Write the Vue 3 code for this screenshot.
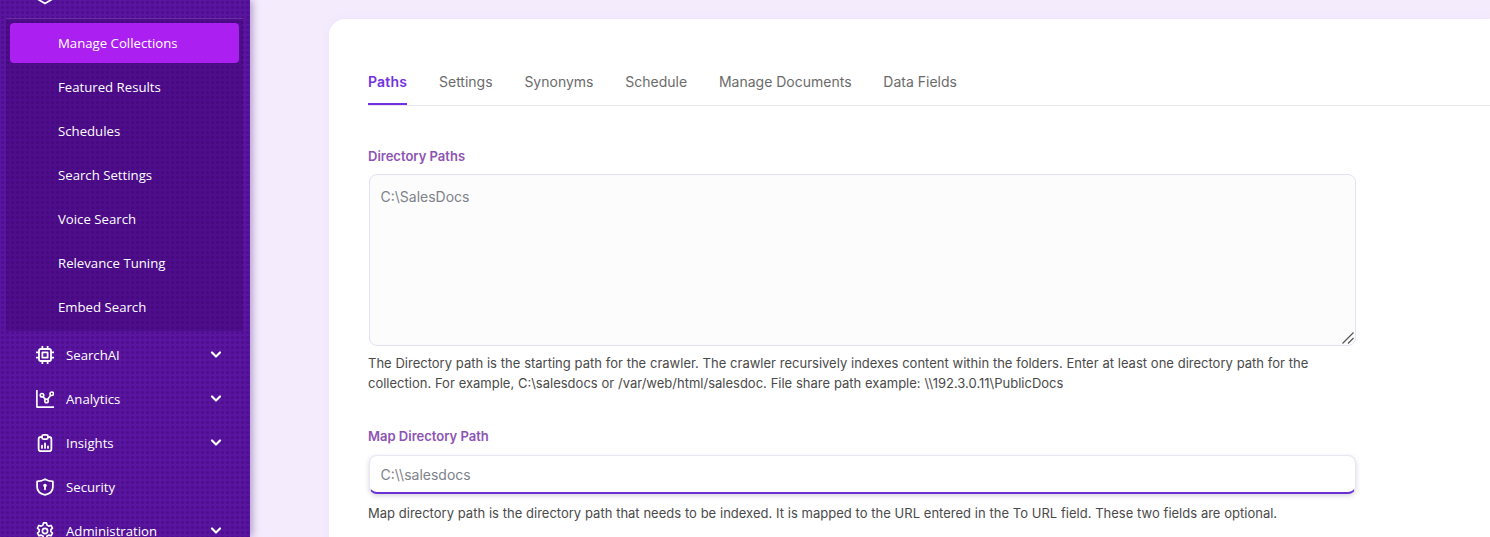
<script setup>
const subItems = ['Featured Results', 'Schedules', 'Search Settings', 'Voice Search', 'Relevance Tuning', 'Embed Search']
const tabs = ['Settings', 'Synonyms', 'Schedule', 'Manage Documents', 'Data Fields']
</script>

<template>
  <div class="page">
    <aside class="sidebar">
      <div class="nav-item top-item">
        <svg class="icon" viewBox="0 0 24 24" fill="none" stroke="currentColor" stroke-width="2.400" stroke-linejoin="round"><path d="M12 2 2 8v8l10 6 10-6V8L12 2Z" /></svg>
      </div>
      <div class="submenu">
        <a class="sub-item active">Manage Collections</a>
        <a v-for="item in subItems" :key="item" class="sub-item">{{ item }}</a>
      </div>
      <div class="nav-item">
        <svg class="icon" viewBox="0 0 24 24" fill="none" stroke="currentColor" stroke-width="2.400" stroke-linecap="butt" stroke-linejoin="round"><rect x="4" y="4" width="16" height="16" rx="2.500" /><rect x="8.500" y="8.500" width="7" height="7" /><path d="M0 8.500h4M0 15.500h4M20 8.500h4M20 15.500h4M8.500 0v4M15.500 0v4M8.500 20v4M15.500 20v4" /></svg>
        <span>SearchAI</span>
        <svg class="chev" viewBox="0 0 12 12" fill="none" stroke="currentColor" stroke-width="2.200" stroke-linecap="round" stroke-linejoin="round"><path d="m2 3.500 4 4 4-4" /></svg>
      </div>
      <div class="nav-item">
        <svg class="icon" viewBox="0 0 24 24" fill="none" stroke="currentColor" stroke-width="2.200" stroke-linecap="butt" stroke-linejoin="round"><path d="M1.200 0v22.800H24" /><circle cx="8" cy="7" r="2.300" /><circle cx="14" cy="14.500" r="2.300" /><circle cx="21" cy="5" r="2.300" /><path d="m9.500 9 3 3.500M15.500 12.500l4-5.500" /></svg>
        <span>Analytics</span>
        <svg class="chev" viewBox="0 0 12 12" fill="none" stroke="currentColor" stroke-width="2.200" stroke-linecap="round" stroke-linejoin="round"><path d="m2 3.500 4 4 4-4" /></svg>
      </div>
      <div class="nav-item">
        <svg class="icon" viewBox="0 0 24 24" fill="none" stroke="currentColor" stroke-width="2.400" stroke-linecap="round" stroke-linejoin="round"><path d="M8 4H6.500a3 3 0 0 0-3 3v13a3 3 0 0 0 3 3h11a3 3 0 0 0 3-3V7a3 3 0 0 0-3-3H16" /><rect x="8" y="1.200" width="8" height="5.500" rx="2" /><path d="M8 18.500v-3M12 18.500v-6M16 18.500v-2" /></svg>
        <span>Insights</span>
        <svg class="chev" viewBox="0 0 12 12" fill="none" stroke="currentColor" stroke-width="2.200" stroke-linecap="round" stroke-linejoin="round"><path d="m2 3.500 4 4 4-4" /></svg>
      </div>
      <div class="nav-item">
        <svg class="icon" viewBox="0 0 24 24" fill="none" stroke="currentColor" stroke-width="2.400" stroke-linecap="round" stroke-linejoin="round"><path d="M12 1.500c2.500 2 6 3 10.500 3v7.500c0 5.500-4 9-10.500 10.500C5.500 21 1.500 17.500 1.500 12V4.500C6 4.500 9.500 3.500 12 1.500Z" /><circle cx="12" cy="10" r="1.200" fill="currentColor" /><path d="M12 11v4" /></svg>
        <span>Security</span>
      </div>
      <div class="nav-item">
        <svg class="icon" viewBox="0 0 24 24" fill="none" stroke="currentColor" stroke-width="2.200" stroke-linecap="round" stroke-linejoin="round"><circle cx="12" cy="12" r="3.500" /><path d="M10 1.200h4l.7 3 2.400 1.300 2.900-.9 2 3.500-2.200 2.100v2.600l2.200 2.100-2 3.500-2.900-.9-2.400 1.300-.7 3h-4l-.7-3-2.400-1.300-2.900.9-2-3.500 2.200-2.100v-2.600L1.900 8.100l2-3.500 2.900.9 2.400-1.300.8-3Z" /></svg>
        <span>Administration</span>
        <svg class="chev" viewBox="0 0 12 12" fill="none" stroke="currentColor" stroke-width="2.200" stroke-linecap="round" stroke-linejoin="round"><path d="m2 3.500 4 4 4-4" /></svg>
      </div>
    </aside>

    <main class="main">
      <section class="card">
        <nav class="tabs">
          <a class="tab tab-active">Paths</a>
          <a v-for="tab in tabs" :key="tab" class="tab">{{ tab }}</a>
        </nav>

        <div class="form">
          <label class="label">Directory Paths</label>
          <div class="textarea-wrap">
            <textarea class="textarea" placeholder="C:\SalesDocs"></textarea>
            <svg class="grip" viewBox="0 0 12 12" fill="none" stroke="#555" stroke-width="1.200"><path d="M0.500 11.500 11.500 0.500M6 11.500 11.500 6" /></svg>
          </div>
          <p class="help">The Directory path is the starting path for the crawler. The crawler recursively indexes content within the folders. Enter at least one directory path for the collection. For example, C:\salesdocs or /var/web/html/salesdoc. File share path example: \\192.3.0.11\PublicDocs</p>

          <label class="label label-map">Map Directory Path</label>
          <input class="input" placeholder="C:\\salesdocs" />
          <p class="help help-map">Map directory path is the directory path that needs to be indexed. It is mapped to the URL entered in the To URL field. These two fields are optional.</p>
        </div>
      </section>
    </main>
  </div>
</template>

<style>
html, body { margin: 0; height: 100%; overflow: hidden; }
</style>

<style scoped>
.page {
  display: flex;
  width: 1490px;
  height: 537px;
  overflow: hidden;
  background: #f4ecfd;
  font-family: Inter, "Liberation Sans", sans-serif;
}
.sidebar {
  flex: 0 0 250px;
  height: 537px;
  box-sizing: border-box;
  overflow: hidden;
  color: #fff;
  font-family: "Open Sans", "Noto Sans", sans-serif;
  font-size: 13.200px;
  background-color: #5a15a0;
  background-image: radial-gradient(circle at 2.500px 2.500px, rgba(60, 5, 115, 0.4) 1.200px, transparent 2px);
  background-size: 5px 5px;
  box-shadow: 2px 0 8px rgba(60, 20, 110, 0.4);
}
.nav-item {
  display: flex;
  align-items: center;
  height: 44px;
  padding: 0 28px 0 36px;
  gap: 12px;
}
.top-item { margin-top: -26px; }
.icon { flex: 0 0 18px; width: 18px; height: 18px; }
.nav-item span { flex: 1; }
.chev { width: 12px; height: 12px; margin-top: -1px; }
.submenu {
  display: flex;
  flex-direction: column;
  gap: 4px;
  margin: 0 7px 2px 6px;
  padding: 4px;
  background-color: rgba(55, 0, 100, 0.34);
  border-top: 1px solid rgba(150, 90, 210, 0.45);
  box-sizing: border-box;
  height: 313px;
}
.sub-item {
  display: flex;
  align-items: center;
  height: 40px;
  flex: 0 0 40px;
  padding-left: 48px;
  border-radius: 4px;
}
.sub-item.active { background: #ab20f0; }
.main {
  flex: 1;
  padding: 19px 0 0 79px;
  min-width: 0;
}
.card {
  background: #fff;
  border-radius: 16px 0 0 0;
  height: 540px;
  padding: 0 0 0 39px;
  box-shadow: 0 0 10px rgba(120, 70, 200, 0.06);
}
.tabs {
  display: flex;
  gap: 31.800px;
  padding-top: 44px;
  border-bottom: 1px solid #e8e3f1;
  height: 42px;
}
.tab {
  height: 42px;
  font-size: 14px;
  line-height: 38px;
  color: #6b6b6b;
  box-sizing: border-box;
}
.tab-active {
  color: #7431e0;
  font-weight: 600;
  letter-spacing: 0.200px;
  border-bottom: 2px solid #7431e0;
}
.form {
  display: flex;
  flex-direction: column;
  width: 988px;
  padding-top: 41px;
}
.label {
  font-size: 13px;
  font-weight: 600;
  line-height: 18px;
  color: #8e54b4;
  margin-bottom: 9px;
}
.textarea-wrap {
  position: relative;
  margin-left: 1px;
  width: 987px;
  height: 172px;
}
.textarea {
  box-sizing: border-box;
  width: 987px;
  margin: 0;
  height: 172px;
  padding: 12px 10.500px;
  border: 1px solid #e4e0f5;
  border-radius: 8px;
  background: #fcfcfd;
  font: 14px/20px Inter, sans-serif;
  outline: none;
  display: block;
  resize: none;
}
.grip {
  position: absolute;
  right: 2px;
  bottom: 2px;
  width: 12px;
  height: 12px;
}
.textarea::placeholder, .input::placeholder { color: #7e8289; opacity: 1; }
.help {
  margin: 7px 0 0;
  font-size: 13px;
  line-height: 20px;
  word-spacing: 0.160px;
  color: #4a4a4a;
}
.label-map { margin-top: 34px; margin-bottom: 10px; }
.input {
  box-sizing: border-box;
  width: 987px;
  margin-left: 1px;
  height: 39px;
  padding: 0 10.500px;
  border: 1px solid #e9e5f3;
  border-bottom: 2px solid #6b2fd6;
  border-radius: 8px;
  background: #fff;
  font: 14px Inter, sans-serif;
  outline: none;
  box-shadow: 0 2px 5px rgba(40, 30, 80, 0.18);
}
.help-map { margin-top: 9px; }
</style>
